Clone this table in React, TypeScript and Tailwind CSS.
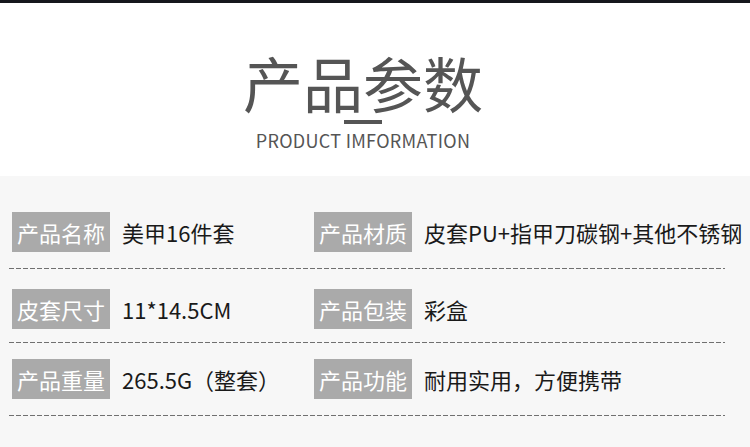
import React from "react";

const font = { fontFamily: '"Noto Sans CJK SC", "Noto Sans", sans-serif' };

function Dash({ mt, mb }: { mt: string; mb: string }) {
  return (
    <div
      className={`ml-[9px] w-[716px] h-px bg-[repeating-linear-gradient(to_right,#707070_0px,#707070_5px,transparent_5px,transparent_7px)] ${mt} ${mb}`}
    />
  );
}

function Cell({ label, value }: { label: string; value: string }) {
  return (
    <div className="flex items-center">
      <div className="w-[98px] h-[40px] bg-[#aaaaaa] text-white text-[22px] leading-none flex items-center justify-center">
        {label}
      </div>
      <div className="ml-[12px] text-[22px] leading-none text-[#1a1a1a] whitespace-nowrap">{value}</div>
    </div>
  );
}

function Row({ a, b }: { a: [string, string]; b: [string, string] }) {
  return (
    <div className="flex pl-[12px]">
      <div className="w-[302px]">
        <Cell label={a[0]} value={a[1]} />
      </div>
      <Cell label={b[0]} value={b[1]} />
    </div>
  );
}

export default function App() {
  return (
    <div className="w-[750px] h-[447px] bg-white overflow-hidden" style={font}>
      <div className="h-[3px] bg-[#15171c]" />
      <div className="h-[173px] flex flex-col items-center pr-[24px]">
        <div className="mt-[49px] text-[60px] leading-none text-[#555555]">产品参数</div>
        <div className="mt-[8px] w-[38px] h-[4px] bg-[#555555]" />
        <div className="mt-[7px] text-[18px] leading-none text-[#555555] tracking-[0.3px]">PRODUCT IMFORMATION</div>
      </div>
      <div className="h-[271px] bg-[#f7f7f7] pt-[36px]">
        <Row a={["产品名称", "美甲16件套"]} b={["产品材质", "皮套PU+指甲刀碳钢+其他不锈钢"]} />
        <Dash mt="mt-[16px]" mb="mb-[20px]" />
        <Row a={["皮套尺寸", "11*14.5CM"]} b={["产品包装", "彩盒"]} />
        <Dash mt="mt-[13px]" mb="mb-[16px]" />
        <Row a={["产品重量", "265.5G（整套）"]} b={["产品功能", "耐用实用，方便携带"]} />
        <Dash mt="mt-[16px]" mb="mb-[0px]" />
      </div>
    </div>
  );
}
